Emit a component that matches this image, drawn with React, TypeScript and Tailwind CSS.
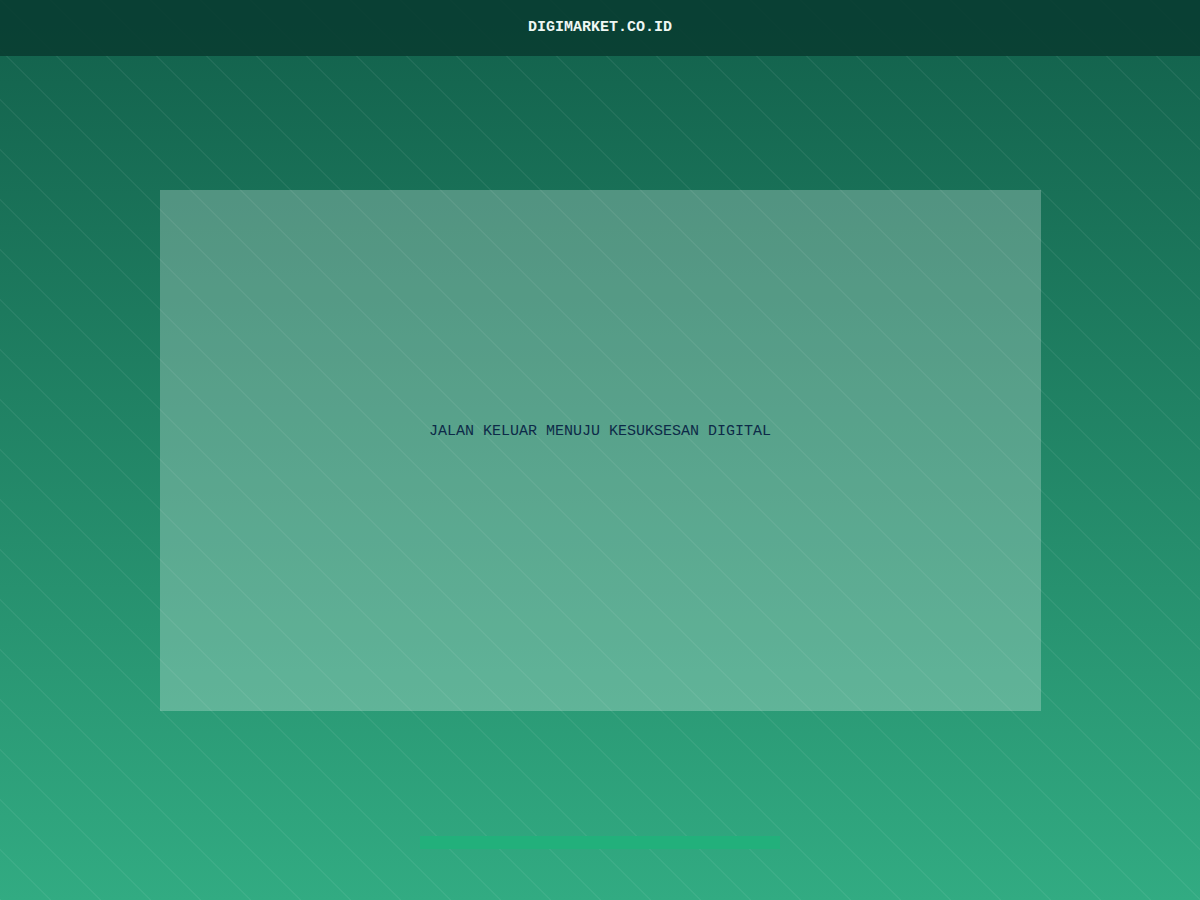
import React from "react";

// faint 45deg hairlines every 50px over the vertical green gradient
const backdrop =
  "bg-[image:repeating-linear-gradient(45deg,rgba(255,255,255,0.055)_0px,rgba(255,255,255,0.055)_1px,transparent_1px,transparent_35.355px),linear-gradient(to_bottom,#12604b,#32ab82)]";

const App = () => {
  return (
    <div className={`h-[900px] w-full flex flex-col font-['Liberation_Mono',monospace] ${backdrop}`}>
      <header className="h-[56px] bg-[#093d32]/90 flex items-center justify-center">
        <span className="text-[15px] font-bold text-[#eef7f3]">DIGIMARKET.CO.ID</span>
      </header>
      <main className="flex flex-col items-center pt-[134px]">
        <section className="w-[881px] h-[521px] bg-white/25 flex items-center justify-center pb-[36px]">
          <p className="text-[15px] text-[#0d2a48]">JALAN KELUAR MENUJU KESUKSESAN DIGITAL</p>
        </section>
        <div className="mt-[125px] w-[360px] h-[13px] bg-[#22b07b]" />
      </main>
    </div>
  );
};

export default App;
